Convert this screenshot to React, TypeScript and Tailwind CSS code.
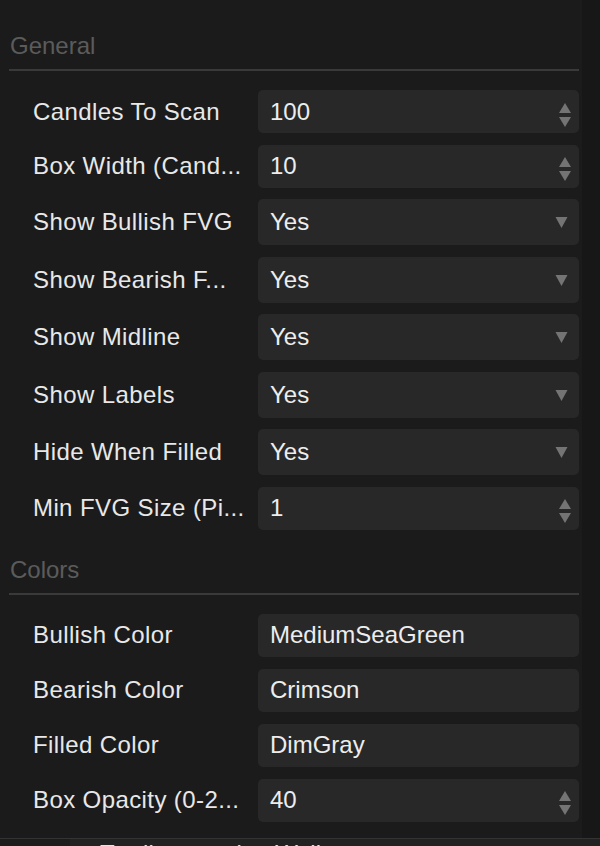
import React from "react";

type Field = {
  label: string;
  value: string;
  kind: "spin" | "select" | "text";
};

const general: Field[] = [
  { label: "Candles To Scan", value: "100", kind: "spin" },
  { label: "Box Width (Cand...", value: "10", kind: "spin" },
  { label: "Show Bullish FVG", value: "Yes", kind: "select" },
  { label: "Show Bearish F...", value: "Yes", kind: "select" },
  { label: "Show Midline", value: "Yes", kind: "select" },
  { label: "Show Labels", value: "Yes", kind: "select" },
  { label: "Hide When Filled", value: "Yes", kind: "select" },
  { label: "Min FVG Size (Pi...", value: "1", kind: "spin" },
];

const colors: Field[] = [
  { label: "Bullish Color", value: "MediumSeaGreen", kind: "text" },
  { label: "Bearish Color", value: "Crimson", kind: "text" },
  { label: "Filled Color", value: "DimGray", kind: "text" },
  { label: "Box Opacity (0-2...", value: "40", kind: "spin" },
];

function SpinArrows() {
  return (
    <svg width="14" height="32" viewBox="0 0 14 32" className="mr-[7px]">
      <path d="M7 7 L13 17 L1 17 Z" fill="#747474" />
      <path d="M1 22 L13 22 L7 32 Z" fill="#747474" transform="translate(0 -1)" />
    </svg>
  );
}

function Caret() {
  return (
    <svg width="13" height="12" viewBox="0 0 13 12" className="mr-[11px]">
      <path d="M0.5 1 L12.5 1 L6.5 12 Z" fill="#747474" />
    </svg>
  );
}

function Row({ field }: { field: Field }) {
  const height = field.kind === "select" ? "h-[46px]" : "h-[43px]";
  return (
    <div className="flex items-center">
      <div className="w-[249px] shrink-0 whitespace-nowrap pl-[24px] tracking-[0.4px] text-[#e8e8e8]">
        {field.label}
      </div>
      <div
        className={`flex ${height} flex-1 items-center justify-between rounded-[5px] bg-[#282828] pl-[12px] text-[#ededed]`}
      >
        <span>{field.value}</span>
        {field.kind === "spin" && <SpinArrows />}
        {field.kind === "select" && <Caret />}
      </div>
    </div>
  );
}

function Section({ title, fields, gap }: { title: string; fields: Field[]; gap: string }) {
  return (
    <div>
      <div className="pl-[1px] leading-[28px] text-[#5b5b5b]">{title}</div>
      <div className="mt-[9px] h-[2px] bg-[#3a3a3a]" />
      <div className={`mt-[19px] flex flex-col ${gap}`}>
        {fields.map((f) => (
          <Row key={f.label} field={f} />
        ))}
      </div>
    </div>
  );
}

export default function App() {
  return (
    <div className="flex h-[846px] flex-col overflow-hidden bg-[#1b1b1b] font-['Liberation_Sans',Arial,sans-serif] text-[24px] leading-[28px]">
      <div className="flex flex-1">
        <div className="w-[582px] pl-[9px] pr-[3px] pt-[32px]">
          <Section title="General" fields={general} gap="gap-[11.5px]" />
          <div className="mt-[26px]">
            <Section title="Colors" fields={colors} gap="gap-[12px]" />
          </div>
        </div>
        <div className="flex-1 bg-[#171717]" />
      </div>
      <div className="flex h-[8px] shrink-0 border-t border-[#333333] bg-[#222222]">
        <div className="w-[70px] bg-[#1c1c1c]" />
        <div className="pl-[30px] pt-[1px] whitespace-nowrap leading-[28px] text-[#dfe6f0]">
          Trading session Wallet
        </div>
      </div>
    </div>
  );
}
